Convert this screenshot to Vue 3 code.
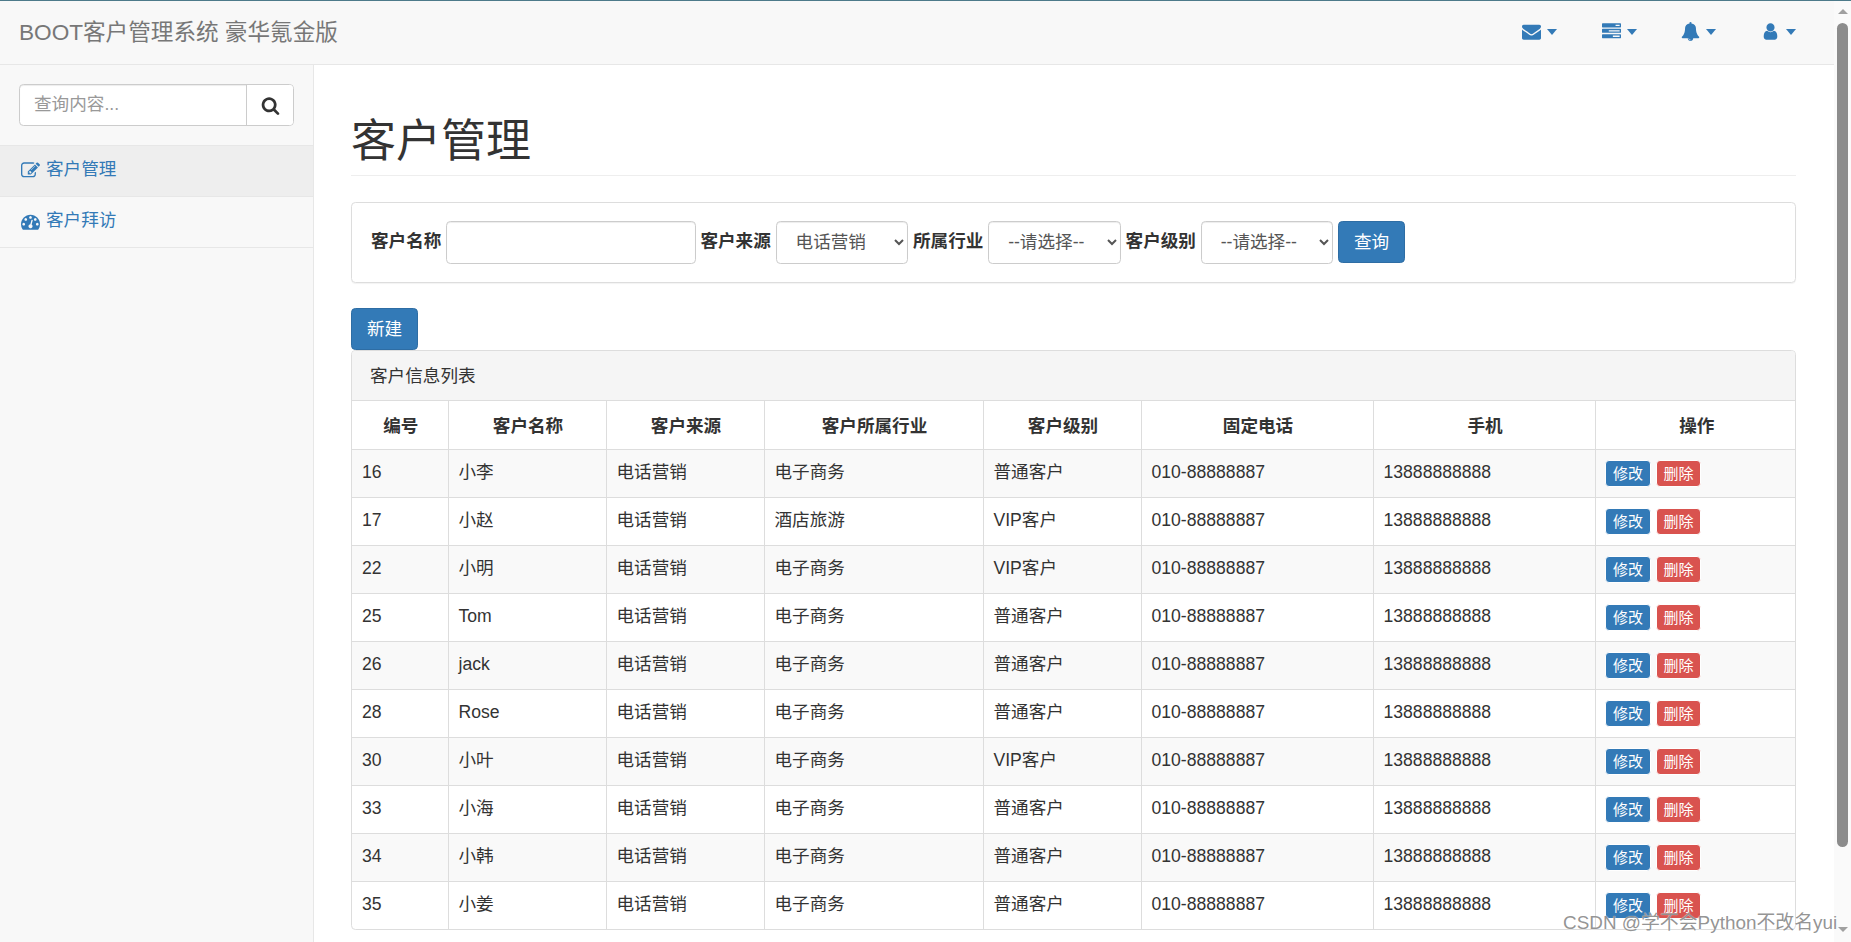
<script setup>
const icons = {
  search: 'M1216 832q0-185-131.5-316.5t-316.5-131.5-316.5 131.5-131.5 316.5 131.5 316.5 316.5 131.5 316.5-131.5 131.5-316.5zm512 832q0 52-38 90t-90 38q-54 0-90-38l-343-342q-179 124-399 124-143 0-273.5-55.5t-225-150-150-225-55.5-273.5 55.5-273.5 150-225 225-150 273.5-55.5 273.5 55.5 225 150 150 225 55.5 273.5q0 220-124 399l343 343q37 37 37 90z',
  envelope: 'M1792 710v794q0 66-47 113t-113 47h-1472q-66 0-113-47t-47-113v-794q44 49 101 87 362 246 497 345 57 42 92.5 65.5t94.5 48 110 24.5h2q51 0 110-24.5t94.5-48 92.5-65.5q170-123 498-345 57-39 100-87zm0-294q0 79-49 151t-122 123q-376 261-468 325-10 7-42.5 30.5t-54 38-52 32.5-57.5 27-50 9h-2q-23 0-50-9t-57.5-27-52-32.5-54-38-42.5-30.5q-91-64-262-182.5t-205-142.5q-62-42-117-115.5t-55-136.5q0-78 41.5-130t118.5-52h1472q65 0 112.5 47t47.5 113z',
  bell: 'M912 1696q0-16-16-16-59 0-101.5-42.5t-42.5-101.5q0-16-16-16t-16 16q0 73 51.5 124.5t124.5 51.5q16 0 16-16zm816-288q0 52-38 90t-90 38h-448q0 106-75 181t-181 75-181-75-75-181h-448q-52 0-90-38t-38-90q50-42 91-88t85-119.5 74.5-158.5 50-206 19.5-260q0-152 117-282.5t307-158.5q-8-19-8-39 0-40 28-68t68-28 68 28 28 68q0 20-8 39 190 28 307 158.5t117 282.5q0 139 19.5 260t50 206 74.5 158.5 85 119.5 91 88z',
  user: 'M1536 1399q0 109-62.5 187t-150.5 78h-854q-88 0-150.5-78t-62.5-187q0-85 8.5-160.5t31.5-152 58.5-131 94-89 134.5-34.5q131 128 313 128t313-128q76 0 134.5 34.5t94 89 58.5 131 31.5 152 8.5 160.5zm-256-887q0 159-112.5 271.5t-271.5 112.5-271.5-112.5-112.5-271.5 112.5-271.5 271.5-112.5 271.5 112.5 112.5 271.5z',
  tasks: 'M1024 1408h640v-128h-640v128zm-384-512h1024v-128h-1024v128zm640-512h384v-128h-384v128zm512 832v256q0 26-19 45t-45 19h-1664q-26 0-45-19t-19-45v-256q0-26 19-45t45-19h1664q26 0 45 19t19 45zm0-512v256q0 26-19 45t-45 19h-1664q-26 0-45-19t-19-45v-256q0-26 19-45t45-19h1664q26 0 45 19t19 45zm0-512v256q0 26-19 45t-45 19h-1664q-26 0-45-19t-19-45v-256q0-26 19-45t45-19h1664q26 0 45 19t19 45z',
  edit: 'M888 1184l116-116-152-152-116 116v56h96v96h56zm440-720q-16-16-33 1l-350 350q-17 17-1 33t33-1l350-350q17-17 1-33zm80 594v190q0 119-84.5 203.5t-203.5 84.5h-832q-119 0-203.5-84.5t-84.5-203.5v-832q0-119 84.5-203.5t203.5-84.5h832q63 0 117 25 15 7 18 23 3 17-9 29l-49 49q-14 14-32 8-23-6-45-6h-832q-66 0-113 47t-47 113v832q0 66 47 113t113 47h832q66 0 113-47t47-113v-126q0-13 9-22l64-64q15-15 35-7t20 29zm-96-738l288 288-672 672h-288v-288zm444 132l-92 92-288-288 92-92q28-28 68-28t68 28l152 152q28 28 28 68t-28 68z',
  dashboard: 'M384 1152q0-53-37.5-90.5t-90.5-37.5-90.5 37.5-37.5 90.5 37.5 90.5 90.5 37.5 90.5-37.5 37.5-90.5zm192-448q0-53-37.5-90.5t-90.5-37.5-90.5 37.5-37.5 90.5 37.5 90.5 90.5 37.5 90.5-37.5 37.5-90.5zm428 481l101-382q6-26-7.5-48.5t-38.5-29.5-48 6.5-30 39.5l-101 382q-60 5-107 43.5t-63 98.5q-20 77 20 146t117 89 146-20 89-117q16-60-6-117t-72-91zm660-33q0-53-37.5-90.5t-90.5-37.5-90.5 37.5-37.5 90.5 37.5 90.5 90.5 37.5 90.5-37.5 37.5-90.5zm-640-640q0-53-37.5-90.5t-90.5-37.5-90.5 37.5-37.5 90.5 37.5 90.5 90.5 37.5 90.5-37.5 37.5-90.5zm448 192q0-53-37.5-90.5t-90.5-37.5-90.5 37.5-37.5 90.5 37.5 90.5 90.5 37.5 90.5-37.5 37.5-90.5zm320 448q0 261-141 483-19 29-54 29h-1402q-35 0-54-29-141-221-141-483 0-182 71-348t191-286 286-191 348-71 348 71 286 191 191 286 71 348z'
}
const navItems = ['envelope', 'tasks', 'bell', 'user']
const columns = [
  { title: '编号', width: 96 },
  { title: '客户名称', width: 158 },
  { title: '客户来源', width: 158 },
  { title: '客户所属行业', width: 219 },
  { title: '客户级别', width: 158 },
  { title: '固定电话', width: 232 },
  { title: '手机', width: 222 },
  { title: '操作', width: 201 }
]
const rows = [
  [16, '小李', '电子商务', '普通客户'],
  [17, '小赵', '酒店旅游', 'VIP客户'],
  [22, '小明', '电子商务', 'VIP客户'],
  [25, 'Tom', '电子商务', '普通客户'],
  [26, 'jack', '电子商务', '普通客户'],
  [28, 'Rose', '电子商务', '普通客户'],
  [30, '小叶', '电子商务', 'VIP客户'],
  [33, '小海', '电子商务', '普通客户'],
  [34, '小韩', '电子商务', '普通客户'],
  [35, '小姜', '电子商务', '普通客户']
].map(([id, name, industry, level]) => ({ id, name, industry, level }))
</script>

<template>
  <div class="shell">
    <div class="page">
      <header class="navbar">
        <div class="brand">BOOT客户管理系统 豪华氪金版</div>
        <div class="nav-right">
          <div v-for="n in navItems" :key="n" class="nav-item">
            <svg class="nav-icon" viewBox="0 0 1792 1792"><path :d="icons[n]" /></svg>
            <span class="caret"></span>
          </div>
        </div>
      </header>
      <div class="body">
        <aside class="sidebar">
          <div class="search-wrap">
            <div class="search">
              <input class="search-input" placeholder="查询内容..." />
              <button class="search-btn">
                <svg class="search-icon" viewBox="0 0 1792 1792"><path :d="icons.search" /></svg>
              </button>
            </div>
          </div>
          <a class="side-item active">
            <svg class="side-icon" viewBox="0 0 1792 1792"><path :d="icons.edit" /></svg>客户管理
          </a>
          <a class="side-item">
            <svg class="side-icon" viewBox="0 0 1792 1792"><path :d="icons.dashboard" /></svg>客户拜访
          </a>
        </aside>
        <main class="main">
          <h1 class="title">客户管理</h1>
          <form class="well" @submit.prevent>
            <label class="lbl">客户名称</label>
            <input class="ctl name-input" />
            <label class="lbl">客户来源</label>
            <select class="ctl sel"><option>电话营销</option></select>
            <label class="lbl">所属行业</label>
            <select class="ctl sel"><option>--请选择--</option></select>
            <label class="lbl">客户级别</label>
            <select class="ctl sel"><option>--请选择--</option></select>
            <button class="btn primary search-submit">查询</button>
          </form>
          <button class="btn primary new-btn">新建</button>
          <section class="panel">
            <div class="panel-head">客户信息列表</div>
            <table class="table">
              <colgroup>
                <col v-for="c in columns" :key="c.title" :style="{ width: c.width + 'px' }" />
              </colgroup>
              <thead>
                <tr>
                  <th v-for="c in columns" :key="c.title">{{ c.title }}</th>
                </tr>
              </thead>
              <tbody>
                <tr v-for="r in rows" :key="r.id">
                  <td>{{ r.id }}</td>
                  <td>{{ r.name }}</td>
                  <td>电话营销</td>
                  <td>{{ r.industry }}</td>
                  <td>{{ r.level }}</td>
                  <td>010-88888887</td>
                  <td>13888888888</td>
                  <td>
                    <div class="ops">
                      <a class="mini primary">修改</a>
                      <a class="mini danger">删除</a>
                    </div>
                  </td>
                </tr>
              </tbody>
            </table>
          </section>
        </main>
      </div>
    </div>
    <div class="scrollbar">
      <span class="arrow up"></span>
      <div class="thumb"></div>
      <span class="arrow down"></span>
    </div>
    <div class="watermark">CSDN @学不会Python不改名yui</div>
  </div>
</template>

<style scoped>
.shell {
  position: relative;
  display: flex;
  height: 942px;
  box-sizing: border-box;
  border-top: 1px solid #4d7a8a;
  overflow: hidden;
  background: #fff;
  font-family: "Liberation Sans", "Noto Sans CJK SC", sans-serif;
  font-size: 17.6px;
  line-height: 25.14px;
  color: #333;
}
.page {
  flex: 1;
  min-width: 0;
  display: flex;
  flex-direction: column;
}
.navbar {
  height: 64px;
  flex: none;
  box-sizing: border-box;
  display: flex;
  align-items: center;
  justify-content: space-between;
  background: #f8f8f8;
  border-bottom: 1px solid #e7e7e7;
  padding: 0 38px 0 19px;
}
.brand {
  font-size: 22.6px;
  color: #777;
}
.nav-right {
  display: flex;
  padding-bottom: 2px;
}
.nav-item {
  width: 79.7px;
  display: flex;
  align-items: center;
  justify-content: flex-end;
  gap: 6px;
}
.nav-icon {
  width: 19px;
  height: 19px;
  fill: #337ab7;
}
.caret {
  width: 0;
  height: 0;
  border-left: 5.5px solid transparent;
  border-right: 5.5px solid transparent;
  border-top: 6px solid #337ab7;
}
.body {
  flex: 1;
  display: flex;
  min-height: 0;
}
.sidebar {
  width: 313px;
  flex: none;
  box-sizing: content-box;
  background: #f8f8f8;
  border-right: 1px solid #e7e7e7;
}
.search-wrap {
  padding: 19px 19px;
  border-bottom: 1px solid #e7e7e7;
  box-sizing: border-box;
  height: 81px;
}
.search {
  display: flex;
  width: 275px;
  height: 42px;
  box-sizing: border-box;
  border: 1px solid #ccc;
  border-radius: 4.4px;
  background: #fff;
  overflow: hidden;
  box-shadow: inset 0 1px 1px rgba(0, 0, 0, 0.075);
}
.search-input {
  flex: 1;
  min-width: 0;
  border: 0;
  outline: 0;
  background: transparent;
  padding: 0 14px;
  font: inherit;
}
.search-input::placeholder {
  color: #999;
}
.search-btn {
  width: 47px;
  flex: none;
  border: 0;
  border-left: 1px solid #ccc;
  background: #fff;
  padding: 0;
  display: flex;
  align-items: center;
  justify-content: center;
}
.search-icon {
  width: 19px;
  height: 19px;
  fill: #333;
}
.side-item {
  height: 51px;
  box-sizing: border-box;
  display: flex;
  align-items: center;
  gap: 6px;
  padding: 0 0 2px 21px;
  border-bottom: 1px solid #e7e7e7;
  color: #337ab7;
}
.side-item.active {
  background: #eee;
}
.side-icon {
  width: 19px;
  height: 19px;
  fill: #337ab7;
}
.main {
  flex: 1;
  min-width: 0;
  padding: 0 38px 0 37px;
}
.title {
  margin: 45px 0 0;
  height: 66px;
  box-sizing: border-box;
  font-size: 45px;
  line-height: 63px;
  font-weight: 400;
  border-bottom: 1px solid #eee;
}
.well {
  margin-top: 26px;
  height: 81px;
  box-sizing: border-box;
  border: 1px solid #ddd;
  border-radius: 4.4px;
  box-shadow: 0 1px 1px rgba(0, 0, 0, 0.05);
  padding: 0 18px 0 19px;
  display: flex;
  align-items: center;
  gap: 4.8px;
}
.lbl {
  font-weight: 700;
  white-space: nowrap;
  margin: -2px 0 0;
}
.ctl {
  height: 43px;
  box-sizing: border-box;
  border: 1px solid #ccc;
  border-radius: 4.4px;
  background: #fff;
  font: inherit;
  color: #555;
  box-shadow: inset 0 1px 1px rgba(0, 0, 0, 0.075);
  outline: 0;
}
.name-input {
  width: 249.4px;
  padding: 0 14px;
}
.sel {
  width: 132.6px;
  padding: 0 15px 2px;
}
.btn {
  height: 42px;
  width: 67px;
  padding: 1px 0 0;
  border: 1px solid #2e6da4;
  border-radius: 4.4px;
  font: inherit;
  color: #fff;
  text-align: center;
}
.search-submit {
  margin-top: -1px;
}
.primary {
  background: #337ab7;
  border-color: #2e6da4;
}
.danger {
  background: #d9534f;
  border-color: #d43f3a;
}
.new-btn {
  display: block;
  margin-top: 25px;
}
.panel {
  border: 1px solid #ddd;
  border-radius: 4.4px;
  overflow: hidden;
}
.panel-head {
  height: 50px;
  box-sizing: border-box;
  padding: 13px 18px 0;
  background: #f5f5f5;
  border-bottom: 1px solid #ddd;
}
.table {
  width: 100%;
  table-layout: fixed;
  border-collapse: collapse;
}
.table th,
.table td {
  height: 48px;
  box-sizing: border-box;
  padding: 10.8px 10px 6.8px;
  border: 1px solid #ddd;
  vertical-align: top;
  text-align: left;
}
.table tr:first-child th {
  border-top: 0;
}
.table th {
  text-align: center;
  font-weight: 700;
  vertical-align: middle;
  padding: 3px 9px 0 11px;
}
.table th:first-child,
.table td:first-child {
  border-left: 0;
}
.table th:last-child,
.table td:last-child {
  border-right: 0;
}
.table tbody tr:last-child td {
  border-bottom: 0;
}
.table tbody tr:nth-child(odd) {
  background: #f9f9f9;
}
.ops {
  display: flex;
  gap: 5px;
  margin: 0 0 0 -0.5px;
}
.mini {
  width: 46px;
  height: 27px;
  box-sizing: border-box;
  border: 1px solid;
  border-radius: 4px;
  color: #fff;
  font-size: 15px;
  line-height: 25px;
  text-align: center;
}
.danger.mini {
  width: 45px;
}
.scrollbar {
  width: 17px;
  flex: none;
  background: #fafafa;
  display: flex;
  flex-direction: column;
  align-items: center;
}
.thumb {
  width: 11px;
  height: 824px;
  margin-top: 9px;
  border-radius: 6px;
  background: #8c8c8c;
}
.arrow {
  width: 0;
  height: 0;
  border-left: 5.5px solid transparent;
  border-right: 5.5px solid transparent;
}
.arrow.up {
  margin-top: 8px;
  border-bottom: 5.5px solid #a0a0a0;
}
.arrow.down {
  margin-top: 80px;
  border-top: 5.5px solid #a0a0a0;
}
.watermark {
  position: absolute;
  left: 1563px;
  top: 910px;
  font-size: 18.9px;
  line-height: 24px;
  white-space: nowrap;
  color: rgba(120, 120, 120, 0.8);
  text-shadow: 0 0 1px #fff;
}
</style>

<style>
html,
body {
  margin: 0;
  overflow: hidden;
}
</style>
